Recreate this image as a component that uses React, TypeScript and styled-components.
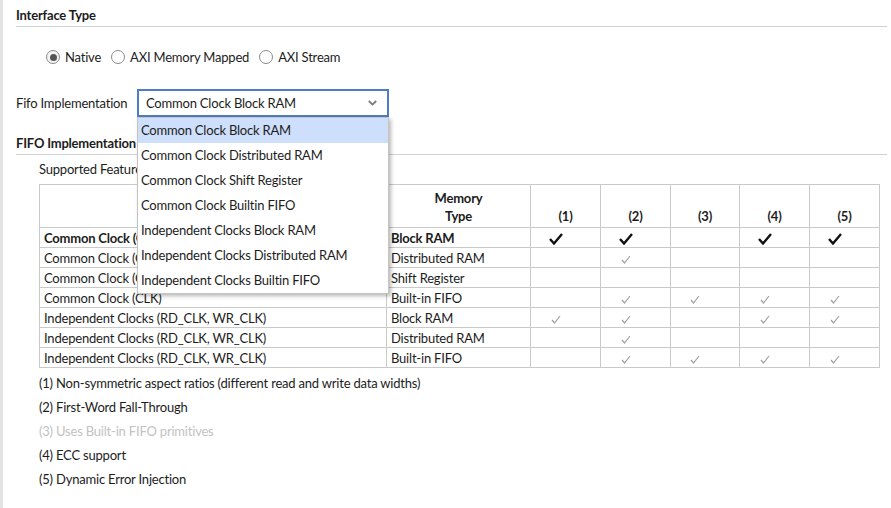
import * as React from 'react';
import styled, { createGlobalStyle } from 'styled-components';

const GlobalStyle = createGlobalStyle`
  body {
    margin: 0;
    background: #fff;
    font-family: Lato, "Open Sans", sans-serif;
    font-size: 13px;
    letter-spacing: -0.2px;
    color: #1c1c1c;
  }
`;

const Page = styled.div`
  height: 508px;
  box-sizing: border-box;
  border-left: 3px solid #e3e3e3;
  padding: 0 4px 0 13px;
  overflow: hidden;
`;

const SectionTitle = styled.div<{ top: number }>`
  margin-top: ${(p) => p.top}px;
  font-weight: bold;
  line-height: 18px;
  padding-bottom: 2px;
  border-bottom: 1px solid #d2d2d2;
`;

const RadioRow = styled.div`
  display: flex;
  align-items: center;
  margin: 21px 0 0 30px;
  height: 18px;
  gap: 10px;
`;

const RadioOption = styled.label`
  display: flex;
  align-items: center;
  gap: 5px;
`;

const RadioCircle = styled.span<{ checked?: boolean }>`
  width: 12px;
  height: 12px;
  border-radius: 50%;
  border: 1px solid #8a8a8a;
  background: ${(p) => (p.checked ? '#f4f4f4' : '#fff')};
  display: flex;
  align-items: center;
  justify-content: center;
  &::after {
    content: '';
    display: ${(p) => (p.checked ? 'block' : 'none')};
    width: 7px;
    height: 7px;
    border-radius: 50%;
    background: #555;
  }
`;

const FieldRow = styled.div`
  display: flex;
  align-items: center;
  margin-top: 23px;
  height: 28px;
`;

const FieldLabel = styled.div`
  width: 121px;
`;

const SelectWrap = styled.div`
  position: relative;
`;

const SelectBox = styled.div`
  width: 252px;
  height: 28px;
  box-sizing: border-box;
  border: 2px solid #4f7cc8;
  display: flex;
  align-items: center;
  justify-content: space-between;
  padding: 0 10px 0 7px;
`;

const DropList = styled.div`
  position: absolute;
  top: 28px;
  left: 0;
  width: 252px;
  box-sizing: border-box;
  background: #fff;
  border: 1px solid #c4c4c4;
  box-shadow: 2px 2px 4px rgba(0, 0, 0, 0.28);
  z-index: 5;
`;

const DropItem = styled.div<{ active?: boolean }>`
  height: 25px;
  line-height: 25px;
  padding-left: 3px;
  background: ${(p) => (p.active ? '#cddffa' : 'transparent')};
`;

const Subtitle = styled.div`
  margin: 5px 0 0 23px;
  line-height: 18px;
`;

const Table = styled.table`
  margin: 6px 0 0 23px;
  width: 840px;
  border-collapse: collapse;
  table-layout: fixed;
  background: #fff;
  td,
  th {
    border: 1px solid #cacaca;
    padding: 0 4px;
    white-space: nowrap;
    overflow: hidden;
  }
`;

const HeadRow = styled.tr`
  height: 43px;
`;

const HeadCell = styled.th`
  vertical-align: bottom;
  text-align: center;
  padding-bottom: 2px !important;
  line-height: 18px;
  font-weight: bold;
`;

const Row = styled.tr<{ bold?: boolean }>`
  height: 20px;
  font-weight: ${(p) => (p.bold ? 'bold' : 'normal')};
  td {
    height: 19px;
    line-height: 18px;
  }
`;

const CheckCell = styled.td`
  text-align: center;
  padding-right: 24px !important;
  svg {
    display: inline-block;
    vertical-align: middle;
  }
`;

const Notes = styled.div`
  margin: 3px 0 0 23px;
`;

const Note = styled.div<{ muted?: boolean }>`
  line-height: 24px;
  color: ${(p) => (p.muted ? '#c2c2c2' : 'inherit')};
`;

const Chevron = () => (
  <svg width="9" height="6" viewBox="0 0 9 6">
    <path d="M0.8 1 L4.5 4.6 L8.2 1" fill="none" stroke="#7a7a7a" strokeWidth="1.8" />
  </svg>
);

const Check = ({ strong }: { strong?: boolean }) =>
  strong ? (
    <svg width="14" height="12" viewBox="0 0 14 12">
      <path d="M1 6 L5 10.5 L13 1" fill="none" stroke="#111" strokeWidth="2.4" strokeLinejoin="miter" />
    </svg>
  ) : (
    <svg width="10" height="9" viewBox="0 0 10 9">
      <path d="M1 5 L3.5 8 L9 1" fill="none" stroke="#a0a0a0" strokeWidth="1.2" />
    </svg>
  );

const options = [
  'Common Clock Block RAM',
  'Common Clock Distributed RAM',
  'Common Clock Shift Register',
  'Common Clock Builtin FIFO',
  'Independent Clocks Block RAM',
  'Independent Clocks Distributed RAM',
  'Independent Clocks Builtin FIFO',
];

const rows = [
  { clock: 'Common Clock (CLK)', mem: 'Block RAM', f: [1, 1, 0, 1, 1] },
  { clock: 'Common Clock (CLK)', mem: 'Distributed RAM', f: [0, 1, 0, 0, 0] },
  { clock: 'Common Clock (CLK)', mem: 'Shift Register', f: [0, 0, 0, 0, 0] },
  { clock: 'Common Clock (CLK)', mem: 'Built-in FIFO', f: [0, 1, 1, 1, 1] },
  { clock: 'Independent Clocks (RD_CLK, WR_CLK)', mem: 'Block RAM', f: [1, 1, 0, 1, 1] },
  { clock: 'Independent Clocks (RD_CLK, WR_CLK)', mem: 'Distributed RAM', f: [0, 1, 0, 0, 0] },
  { clock: 'Independent Clocks (RD_CLK, WR_CLK)', mem: 'Built-in FIFO', f: [0, 1, 1, 1, 1] },
];

const notes = [
  '(1) Non-symmetric aspect ratios (different read and write data widths)',
  '(2) First-Word Fall-Through',
  '(3) Uses Built-in FIFO primitives',
  '(4) ECC support',
  '(5) Dynamic Error Injection',
];

export default function App() {
  return (
    <>
      <GlobalStyle />
      <Page>
        <SectionTitle top={6}>Interface Type</SectionTitle>
        <RadioRow>
          <RadioOption>
            <RadioCircle checked />
            Native
          </RadioOption>
          <RadioOption>
            <RadioCircle />
            AXI Memory Mapped
          </RadioOption>
          <RadioOption>
            <RadioCircle />
            AXI Stream
          </RadioOption>
        </RadioRow>
        <FieldRow>
          <FieldLabel>Fifo Implementation</FieldLabel>
          <SelectWrap>
            <SelectBox>
              <span>Common Clock Block RAM</span>
              <Chevron />
            </SelectBox>
            <DropList>
              {options.map((o, i) => (
                <DropItem key={o} active={i === 0}>
                  {o}
                </DropItem>
              ))}
            </DropList>
          </SelectWrap>
        </FieldRow>
        <SectionTitle top={17}>FIFO Implementation Options</SectionTitle>
        <Subtitle>Supported Features</Subtitle>
        <Table>
          <colgroup>
            <col style={{ width: 347 }} />
            <col style={{ width: 144 }} />
            <col style={{ width: 70 }} />
            <col style={{ width: 70 }} />
            <col style={{ width: 69 }} />
            <col style={{ width: 70 }} />
            <col style={{ width: 70 }} />
          </colgroup>
          <thead>
            <HeadRow>
              <HeadCell />
              <HeadCell>
                Memory
                <br />
                Type
              </HeadCell>
              <HeadCell>(1)</HeadCell>
              <HeadCell>(2)</HeadCell>
              <HeadCell>(3)</HeadCell>
              <HeadCell>(4)</HeadCell>
              <HeadCell>(5)</HeadCell>
            </HeadRow>
          </thead>
          <tbody>
            {rows.map((r, i) => (
              <Row key={i} bold={i === 0}>
                <td>{r.clock}</td>
                <td>{r.mem}</td>
                {r.f.map((v, j) => (
                  <CheckCell key={j}>{v ? <Check strong={i === 0} /> : null}</CheckCell>
                ))}
              </Row>
            ))}
          </tbody>
        </Table>
        <Notes>
          {notes.map((n, i) => (
            <Note key={n} muted={i === 2}>
              {n}
            </Note>
          ))}
        </Notes>
      </Page>
    </>
  );
}
